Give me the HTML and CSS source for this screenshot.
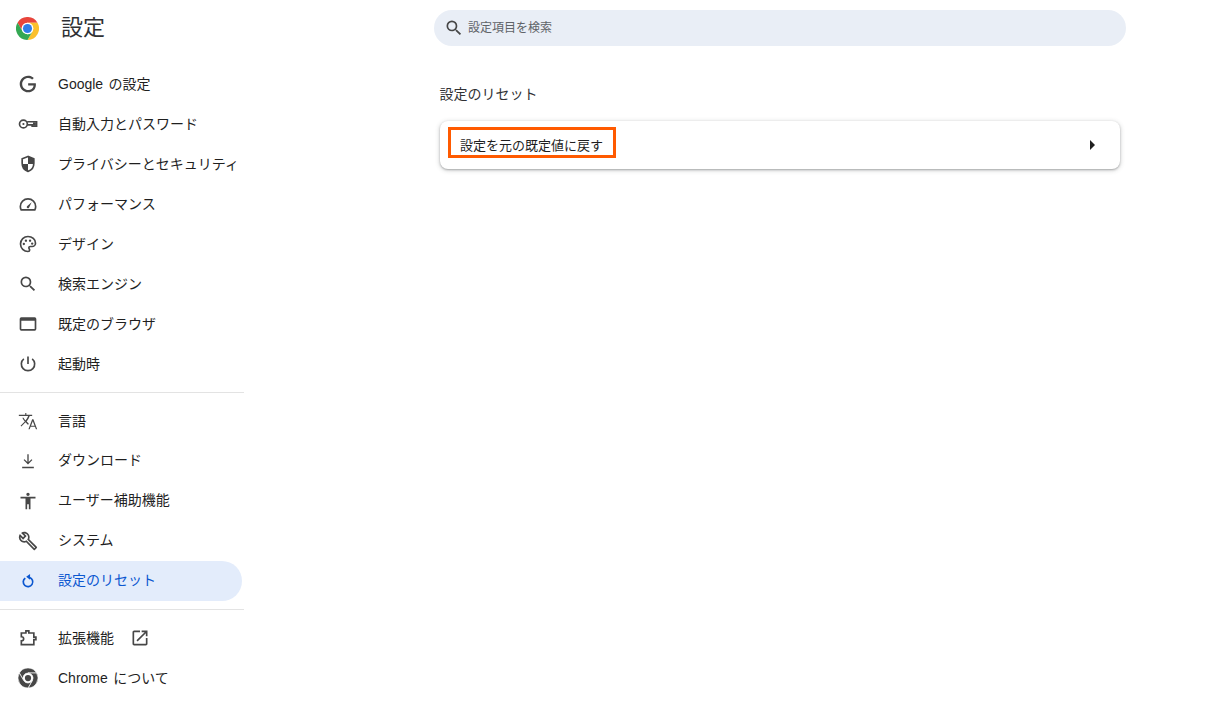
FILE: index.html
```html
<!DOCTYPE html>
<html lang="ja">
<head>
<meta charset="utf-8">
<title>設定</title>
<link rel="stylesheet" href="styles.css">
</head>
<body>
<div class="app">
  <aside class="sidebar">
    <header class="brand">
      <svg class="logo" viewBox="0 0 48 48">
        <path fill="#e8453c" d="M24 12H44.8A24 24 0 0 0 3.2 12L13.6 30A12 12 0 0 1 24 12Z"/>
        <path fill="#fbc02d" transform="rotate(120 24 24)" d="M24 12H44.8A24 24 0 0 0 3.2 12L13.6 30A12 12 0 0 1 24 12Z"/>
        <path fill="#34a853" transform="rotate(240 24 24)" d="M24 12H44.8A24 24 0 0 0 3.2 12L13.6 30A12 12 0 0 1 24 12Z"/>
        <circle cx="24" cy="24" r="12" fill="#fff"/>
        <circle cx="24" cy="24" r="9.5" fill="#2f7de9"/>
      </svg>
      <h1 class="brand-title">設定</h1>
    </header>
    <nav class="nav">
      <a class="item"><svg class="icon" viewBox="0 0 24 24"><path d="M21.35 11.1h-9.17v2.73h6.51c-.33 3.81-3.5 5.44-6.5 5.44C8.36 19.27 5 16.25 5 12c0-4.1 3.2-7.27 7.2-7.27 3.09 0 4.9 1.97 4.9 1.97L19 4.72S16.56 2 12.1 2C6.42 2 2.03 6.8 2.03 12c0 5.05 4.13 10 10.22 10 5.35 0 9.25-3.67 9.25-9.09 0-1.15-.15-1.81-.15-1.81z"/></svg><span>Google の設定</span></a>
      <a class="item"><svg class="icon line" viewBox="0 0 24 24"><circle cx="6.5" cy="12" r="4.7"/><circle cx="6.5" cy="12" r="1.3" class="dot"/><path d="M11 9.3h11.3v5.200h-5.300v-1.500H11"/><rect x="18" y="10" width="3.500" height="4" class="dot"/></svg><span>自動入力とパスワード</span></a>
      <a class="item"><svg class="icon line" viewBox="0 0 24 24"><path d="M12 3 5 5.700v5.500c0 4.500 2.900 8.500 7 9.700 4.100-1.200 7-5.200 7-9.700V5.700z"/><path class="dot" d="M12 3v9h7V5.700zM12 12v9c-4.100-1.200-7-5.200-7-9z"/></svg><span>プライバシーとセキュリティ</span></a>
      <a class="item"><svg class="icon line" viewBox="0 0 24 24"><path d="M3.8 19h16.4c.7-1.300 1-2.700 1-4.100 0-5-4.100-9-9.200-9s-9.200 4-9.200 9c0 1.400.3 2.800 1 4.100z"/><path d="M10.800 14.600 16.400 9.800l-3.200 6.600a1.500 1.500 0 1 1-2.400-1.800z" class="fillin"/></svg><span>パフォーマンス</span></a>
      <a class="item"><svg class="icon line" viewBox="0 0 24 24"><path d="M12 3a9 9 0 0 0 0 18c1.300 0 2-.9 2-1.800 0-1.200-1-1.400-1-2.600 0-1 .8-1.600 1.800-1.600H17a4 4 0 0 0 4-4C21 6.500 17 3 12 3z"/><circle cx="7" cy="12" r="1.400" class="dot"/><circle cx="9.500" cy="8" r="1.400" class="dot"/><circle cx="14.500" cy="8" r="1.400" class="dot"/><circle cx="17" cy="11.500" r="1.400" class="dot"/></svg><span>デザイン</span></a>
      <a class="item"><svg class="icon" viewBox="0 0 24 24"><path d="M15.500 14h-.79l-.28-.27A6.471 6.471 0 0 0 16 9.500 6.500 6.500 0 1 0 9.500 16c1.610 0 3.090-.59 4.230-1.570l.27.28v.79l5 4.990L20.490 19l-4.990-5zm-6 0C7.010 14 5 11.990 5 9.500S7.010 5 9.500 5 14 7.010 14 9.500 11.990 14 9.500 14z"/></svg><span>検索エンジン</span></a>
      <a class="item"><svg class="icon" viewBox="0 0 24 24"><path fill-rule="evenodd" d="M4 4h16a2 2 0 0 1 2 2v12a2 2 0 0 1-2 2H4a2 2 0 0 1-2-2V6a2 2 0 0 1 2-2zm0 4v10h16V8H4z"/></svg><span>既定のブラウザ</span></a>
      <a class="item"><svg class="icon line" viewBox="0 0 24 24"><path d="M12 3v9"/><path d="M7 5.800a8 8 0 1 0 10 0"/></svg><span>起動時</span></a>
      <hr class="rule">
      <a class="item"><svg class="icon" viewBox="0 0 24 24"><path d="M12.870 15.070l-2.540-2.510.03-.03c1.740-1.940 2.980-4.170 3.710-6.530H17V4.500h-7V2.500H8.700v2H1v1.490h11.170C11.500 7.920 10.440 9.750 9 11.350 8.070 10.320 7.300 9.190 6.690 8h-1.500c.73 1.630 1.730 3.170 2.980 4.560l-5.090 5.020L4 18.600l5-5 3.110 3.110.76-1.640zM18.500 10h-1.500L12.500 22h1.500l1.120-3h5.250L21.500 22H23l-4.500-12zm-2.820 7.700l2.070-5.530 2.070 5.530h-4.140z"/></svg><span>言語</span></a>
      <a class="item raised"><svg class="icon" viewBox="0 0 24 24"><path d="M5 19h14v1.600H5zM11.200 4h1.600v9.200l3.400-3.400 1.100 1.100-5.300 5.300-5.300-5.300 1.100-1.100 3.400 3.400z"/></svg><span>ダウンロード</span></a>
      <a class="item raised"><svg class="icon" viewBox="0 0 24 24"><path d="M12 2c1.100 0 2 .9 2 2s-.9 2-2 2-2-.9-2-2 .9-2 2-2zm9 7h-6v13h-2v-6h-2v6H9V9H3V7h18v2z"/></svg><span>ユーザー補助機能</span></a>
      <a class="item raised"><svg class="icon" viewBox="0 0 24 24"><path d="M22.610 18.990l-9.080-9.080c.93-2.340.45-5.100-1.440-7C9.790.61 6.210.4 3.660 2.260L7.500 6.110 6.080 7.520 2.250 3.690C.39 6.230.6 9.820 2.900 12.110c1.860 1.860 4.570 2.350 6.880 1.480l9.110 9.110c.39.39 1.020.39 1.410 0l2.300-2.300c.5-.38.5-1.010.01-1.410zm-3 1.600-9.460-9.460c-.61.45-1.290.72-2 .82-1.360.2-2.790-.21-3.830-1.250C3.370 9.760 2.930 8.500 3 7.260l3.090 3.090 4.240-4.240-3.090-3.090c1.240-.07 2.490.37 3.440 1.310 1.080 1.080 1.490 2.570 1.240 3.960-.12.71-.42 1.370-.88 1.960l9.450 9.450-.88.89z"/></svg><span>システム</span></a>
      <a class="item raised active"><svg class="icon reset" viewBox="0 0 24 24"><path d="M8 7.700a6.700 6.700 0 1 0 6.300-.9l-.6 1.900A4.700 4.700 0 1 1 9.400 9.200z"/><path d="M14.500 3.500v7L9.800 7z"/></svg><span>設定のリセット</span></a>
      <hr class="rule">
      <a class="item"><svg class="icon line" viewBox="0 0 24 24"><path d="M4 6h5.500V3.500h3.500V6H19v5h2.500v3H19v6H4v-4.500c1.800 0 2.800-1 2.800-2.500S5.800 10.500 4 10.500z"/></svg><span>拡張機能</span><svg class="icon external" viewBox="0 0 24 24"><path d="M19 19H5V5h7V3H5c-1.110 0-2 .9-2 2v14c0 1.100.89 2 2 2h14c1.100 0 2-.9 2-2v-7h-2v7zM14 3v2h3.590l-9.830 9.830 1.410 1.410L19 6.410V10h2V3h-7z"/></svg></a>
      <a class="item"><svg class="icon chrome" viewBox="0 0 48 48"><path d="M24 12H44.800A24 24 0 0 0 3.200 12L13.600 30A12 12 0 0 1 24 12Z"/><path transform="rotate(120 24 24)" d="M24 12H44.800A24 24 0 0 0 3.200 12L13.600 30A12 12 0 0 1 24 12Z"/><path transform="rotate(240 24 24)" d="M24 12H44.800A24 24 0 0 0 3.200 12L13.600 30A12 12 0 0 1 24 12Z"/><circle cx="24" cy="24" r="7.500" class="core"/></svg><span>Chrome について</span></a>
    </nav>
  </aside>
  <main class="main">
    <div class="search">
      <svg class="search-icon" viewBox="0 0 24 24"><path d="M15.500 14h-.79l-.28-.27A6.471 6.471 0 0 0 16 9.500 6.500 6.500 0 1 0 9.500 16c1.610 0 3.090-.59 4.230-1.570l.27.28v.79l5 4.990L20.490 19l-4.990-5zm-6 0C7.010 14 5 11.990 5 9.500S7.010 5 9.500 5 14 7.010 14 9.500 11.990 14 9.500 14z"/></svg>
      <span class="search-text">設定項目を検索</span>
    </div>
    <h2 class="section-title">設定のリセット</h2>
    <section class="card">
      <span class="highlight">設定を元の既定値に戻す</span>
      <span class="arrow"></span>
    </section>
  </main>
</div>
</body>
</html>
```
FILE: styles.css
```css
* { box-sizing: border-box; }
html, body { margin: 0; height: 100%; background: #fff; }
body {
  font-family: "Liberation Sans", "Noto Sans CJK JP", sans-serif;
  color: #1f1f1f;
  overflow: hidden;
}
.app { display: flex; height: 723px; }
.sidebar { width: 244px; flex: none; }
.brand { display: flex; align-items: center; height: 56px; padding-left: 15.500px; }
.logo { width: 23px; height: 23px; display: block; }
.brand-title { margin: 0 0 0 22.500px; font-size: 22px; font-weight: 400; line-height: 56px; color: #303134; }
.nav { padding-top: 8px; }
.item {
  display: flex;
  align-items: center;
  height: 40px;
  width: 242px;
  padding-left: 18px;
  font-size: 14px;
  white-space: nowrap;
  word-spacing: 1.500px;
  color: #1f1f1f;
  border-radius: 0 20px 20px 0;
}
.item span { padding-bottom: 2px; }
.item.raised span { padding-bottom: 4px; }
.icon { width: 20px; height: 20px; flex: none; margin-right: 20px; fill: #474747; }
.icon.line { fill: none; stroke: #474747; stroke-width: 2; }
.icon.line .dot, .icon.line .fillin { fill: #474747; stroke: none; }
.icon.external { margin: 0 0 0 16px; }
.icon.chrome path { stroke: #fff; stroke-width: 1.500; }
.item.active { background: #e3ecfb; color: #0b57d0; }
.item.active .icon { fill: #0b57d0; }
.rule { margin: 8px 0; border: 0; height: 1px; background: #e3e3e3; }
.main { flex: 1; padding: 10px 0 0 190px; }
.search {
  display: flex;
  align-items: center;
  width: 692px;
  height: 36px;
  padding-left: 10px;
  border-radius: 18px;
  background: #e9eef6;
  font-size: 12px;
  color: #5f6368;
}
.search-icon { width: 20px; height: 20px; margin-right: 4px; fill: #474747; }
.search-text { padding-bottom: 3px; }
.section-title {
  margin: 36px 0 0 5.500px;
  font-size: 14px;
  font-weight: 400;
  line-height: 24px;
  color: #303134;
}
.card {
  display: flex;
  align-items: center;
  justify-content: space-between;
  width: 680px;
  height: 48px;
  margin: 15px 0 0 6px;
  padding: 0 25px 0 8px;
  background: #fff;
  border-radius: 8px;
  box-shadow: 0 1px 2px rgba(60,64,67,.35), 0 1px 4px 1px rgba(60,64,67,.18);
}
.highlight {
  display: flex;
  align-items: center;
  align-self: flex-start;
  width: 168px;
  height: 31px;
  margin-top: 6px;
  padding: 3px 0 0 9px;
  border: 3px solid #ff5a00;
  font-size: 13px;
  white-space: nowrap;
  color: #1f1f1f;
}
.arrow {
  width: 0;
  height: 0;
  border-style: solid;
  border-width: 5px 0 5px 5px;
  border-color: transparent transparent transparent #1f1f1f;
}
```
